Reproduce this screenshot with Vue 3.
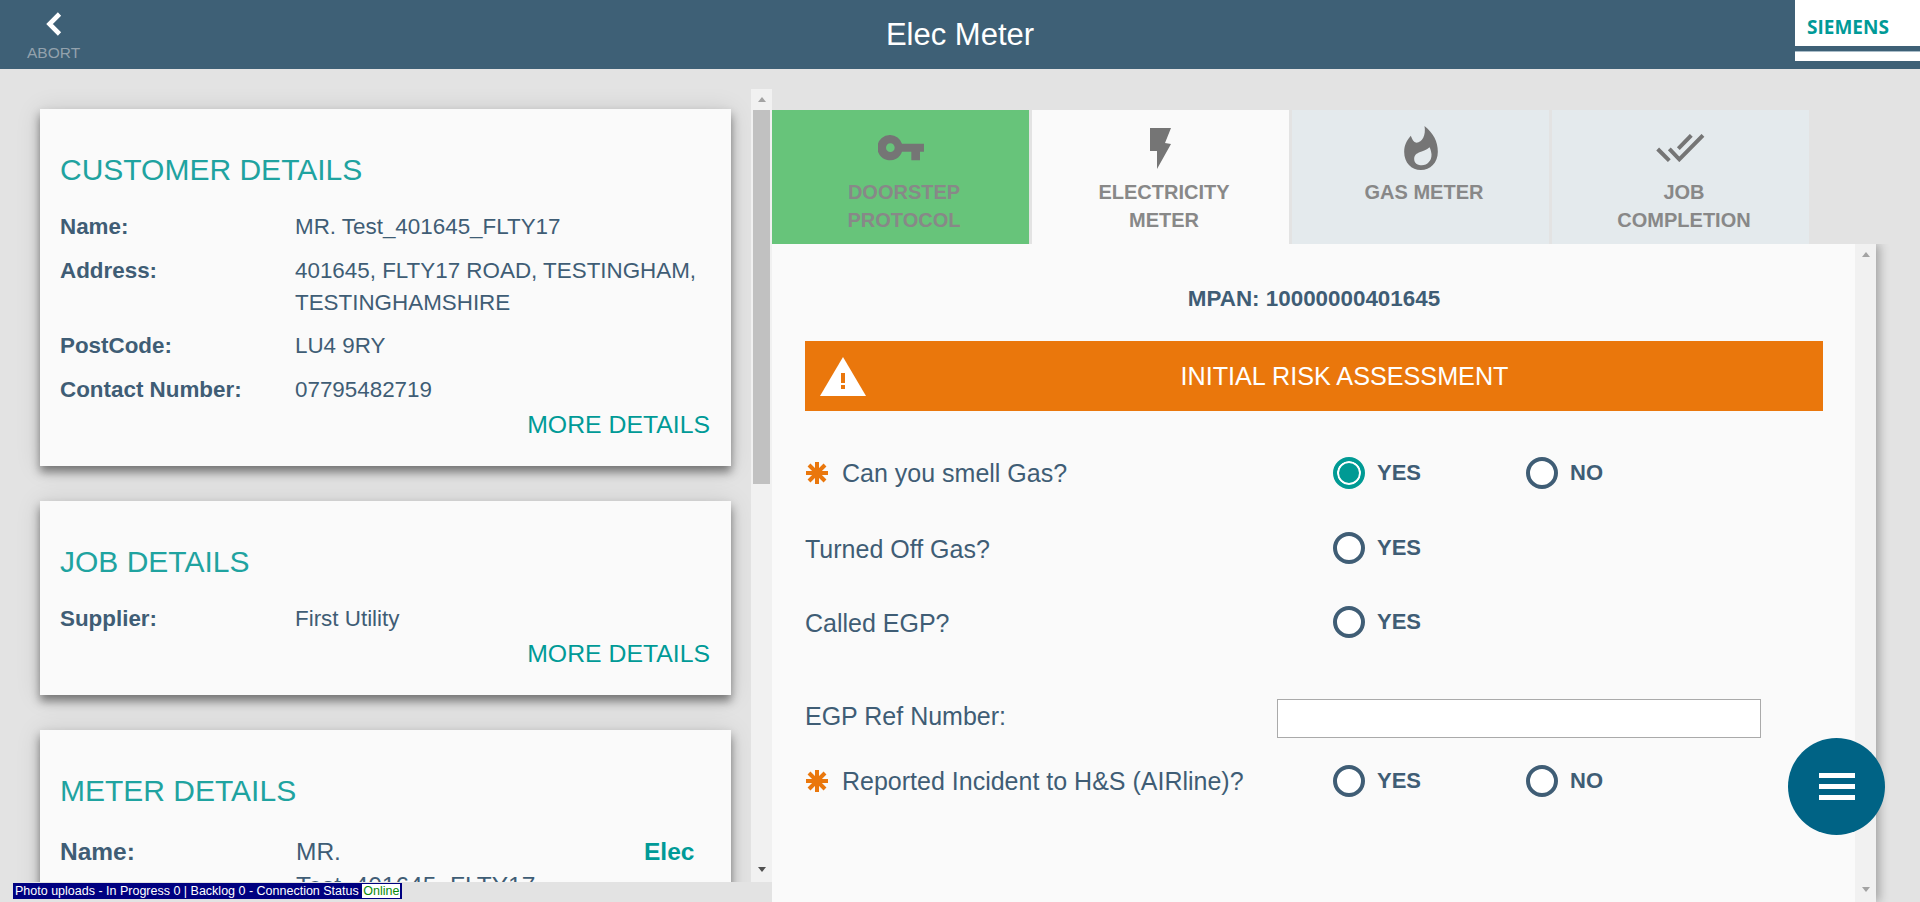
<script setup>
const customerRows = [
  { label: 'Name:', value: 'MR. Test_401645_FLTY17' },
  { label: 'Address:', value: '401645, FLTY17 ROAD, TESTINGHAM, TESTINGHAMSHIRE' },
  { label: 'PostCode:', value: 'LU4 9RY' },
  { label: 'Contact Number:', value: '07795482719' }
]
</script>

<template>
  <div class="app">
    <header class="topbar">
      <div class="abort">
        <svg class="chevron" viewBox="0 0 16 24" width="16" height="24"><path d="M13.5 2 L3.5 12 L13.5 22" fill="none" stroke="#fff" stroke-width="4.6"/></svg>
        <span>ABORT</span>
      </div>
      <h1 class="page-title">Elec Meter</h1>
      <div class="logo">
        <div class="logo-main"><span>SIEMENS</span></div>
        <div class="logo-strip"></div>
      </div>
    </header>

    <main class="content">
      <section class="left-pane">
        <div class="left-scroll">
          <article class="card">
            <h2>CUSTOMER DETAILS</h2>
            <div v-for="row in customerRows" :key="row.label" class="row">
              <strong>{{ row.label }}</strong>
              <span>{{ row.value }}</span>
            </div>
            <a class="more">MORE DETAILS</a>
          </article>
          <article class="card">
            <h2>JOB DETAILS</h2>
            <div class="row">
              <strong>Supplier:</strong>
              <span>First Utility</span>
            </div>
            <a class="more">MORE DETAILS</a>
          </article>
          <article class="card meter">
            <h2>METER DETAILS</h2>
            <div class="meter-row">
              <strong>Name:</strong>
              <span class="meter-value">MR. Test_401645_FLTY17</span>
              <strong class="meter-type">Elec</strong>
            </div>
          </article>
        </div>
        <div class="scrollbar left-bar">
          <div class="arrow-box"><i class="arrow-up"></i></div>
          <div class="thumb"></div>
          <div class="track-fill"></div>
          <div class="arrow-box low"><i class="arrow-down dark"></i></div>
        </div>
      </section>

      <section class="right-pane">
        <nav class="tabs">
          <div class="tab done">
            <div class="tab-icon">
              <svg viewBox="54 46 138 76" width="46" height="25.3"><path fill="#757575" fill-rule="evenodd" d="M91 46a38 38 0 0 1 35 26h66v24h-12v26h-26V96h-28a38 38 0 1 1-35-50zm0 25a13 13 0 1 0 0 26 13 13 0 0 0 0-26z"/></svg>
            </div>
            <div class="tab-label">DOORSTEP<br>PROTOCOL</div>
          </div>
          <div class="tab active">
            <div class="tab-icon">
              <svg viewBox="0 0 21 41" width="21" height="41"><path fill="#757575" d="M0 0H21L15 15L21 16L7 41V23H0Z"/></svg>
            </div>
            <div class="tab-label">ELECTRICITY<br>METER</div>
          </div>
          <div class="tab">
            <div class="tab-icon">
              <svg viewBox="42 28 101 132" width="34" height="44"><path fill="#757575" fill-rule="evenodd" d="M103 28C130 50 143 75 143 105C143 138 120 160 92 160C64 160 42 138 42 105C42 85 50 70 62 57C66 68 70 76 79 78C96 78 108 55 103 28ZM72 127C72 141 84 146 95 146C112 146 125 132 124 113C123 103 121 97 118 92C110 101 98 103 90 106C79 110 72 116 72 127Z"/></svg>
            </div>
            <div class="tab-label">GAS METER</div>
          </div>
          <div class="tab">
            <div class="tab-icon">
              <svg viewBox="50 44 145 85" width="48.3" height="28.3"><path fill="none" stroke="#757575" stroke-width="12" d="M55 89L90 124M90 89L120 120L191 48M117 88L156 48"/></svg>
            </div>
            <div class="tab-label">JOB<br>COMPLETION</div>
          </div>
        </nav>

        <div class="panel">
          <div class="panel-body">
            <div class="mpan">MPAN: 10000000401645</div>
            <div class="banner">
              <svg viewBox="0 0 46 39" width="46" height="39"><path fill="#fff" d="M23 0L46 39H0Z"/><path fill="#ea770c" d="M21 16h4v10h-4zM21 28h4v4h-4z"/></svg>
              <span>INITIAL RISK ASSESSMENT</span>
            </div>

            <div class="question">
              <label class="q-label">
                <svg class="star" viewBox="0 0 22 22" width="22" height="22"><path stroke="#ea770c" stroke-width="4" d="M11 0V22M0 11H22M3 3L19 19M19 3L3 19"/></svg>
                Can you smell Gas?
              </label>
              <div class="option"><i class="radio checked"></i><b>YES</b></div>
              <div class="option"><i class="radio"></i><b>NO</b></div>
            </div>
            <div class="question">
              <label class="q-label">Turned Off Gas?</label>
              <div class="option"><i class="radio"></i><b>YES</b></div>
            </div>
            <div class="question">
              <label class="q-label">Called EGP?</label>
              <div class="option"><i class="radio"></i><b>YES</b></div>
            </div>
            <div class="ref-row">
              <label class="q-label">EGP Ref Number:</label>
              <input class="ref-input" type="text" />
            </div>
            <div class="question incident">
              <label class="q-label">
                <svg class="star" viewBox="0 0 22 22" width="22" height="22"><path stroke="#ea770c" stroke-width="4" d="M11 0V22M0 11H22M3 3L19 19M19 3L3 19"/></svg>
                Reported Incident to H&amp;S (AIRline)?
              </label>
              <div class="option"><i class="radio"></i><b>YES</b></div>
              <div class="option"><i class="radio"></i><b>NO</b></div>
            </div>
          </div>
          <div class="scrollbar panel-bar">
            <div class="arrow-box"><i class="arrow-up"></i></div>
            <div class="track-fill"></div>
            <div class="arrow-box low"><i class="arrow-down"></i></div>
          </div>
        </div>
      </section>
    </main>

    <button class="fab" type="button" aria-label="Menu"><span></span><span></span><span></span></button>
    <div class="status">Photo uploads - In Progress 0 | Backlog 0 - Connection Status <em>Online</em></div>
  </div>
</template>

<style>
html, body { margin: 0; overflow: hidden; }
</style>

<style scoped>
.app {
  position: relative;
  display: flex;
  flex-direction: column;
  height: 100vh;
  overflow: hidden;
  background: #e3e3e3;
  font-family: "Liberation Sans", Arial, sans-serif;
  color: #3f5d75;
}
.topbar {
  position: relative;
  flex: 0 0 69px;
  min-height: 0;
  display: flex;
  justify-content: center;
  background: #3e6076;
}
.abort {
  position: absolute;
  left: 27px;
  top: 12px;
  display: flex;
  flex-direction: column;
  align-items: center;
  color: #93a2ad;
  font-size: 15.5px;
  line-height: 16px;
}
.chevron { display: block; margin-bottom: 9px; }
.page-title {
  margin: 0;
  height: 69px;
  color: #fff;
  font-size: 31px;
  font-weight: 400;
  line-height: 70px;
}
.logo { position: absolute; right: 0; top: 0; width: 125px; }
.logo-main {
  height: 46px;
  background: #fff;
  box-sizing: border-box;
  padding: 16px 0 0 12px;
  color: #009a97;
  font-family: "Open Sans", sans-serif;
  font-weight: 700;
  font-size: 19px;
  line-height: 23px;
  letter-spacing: 0;
}
.logo-strip {
  height: 10px;
  margin-top: 5px;
  background: #fff;
  border-top: 1px solid #a9bcc8;
  box-sizing: border-box;
}

.content { flex: 1; display: flex; min-height: 0; }
.left-pane {
  flex: 0 0 772px;
  display: flex;
  margin: 20px 0;
  min-height: 0;
}
.left-scroll {
  flex: 0 0 751px;
  box-sizing: border-box;
  padding: 20px 20px 0 40px;
  overflow: hidden;
}
.card {
  background: #fafafa;
  padding: 43px 21px 27.5px 20px;
  margin-bottom: 34.5px;
  box-shadow: 0 6px 9px rgba(0, 0, 0, 0.45), 0 2px 24px rgba(0, 0, 0, 0.12);
}
.card h2 {
  margin: 0 0 23px;
  color: #1fa3a0;
  font-size: 30px;
  font-weight: 400;
  line-height: 36px;
}
.row {
  display: grid;
  grid-template-columns: 235px 1fr;
  font-size: 22.4px;
  line-height: 32px;
  margin-bottom: 11.5px;
}
.row strong { font-weight: 700; }
.more {
  display: block;
  margin-top: -6.5px;
  text-align: right;
  color: #009a97;
  font-size: 24.8px;
  line-height: 28px;
}
.meter-row {
  display: grid;
  grid-template-columns: 236px 348px auto;
  font-size: 24.5px;
  line-height: 34px;
  margin-top: 26.5px;
}
.meter-value { width: 270px; }
.meter-type { color: #009a97; }

.scrollbar {
  flex: 0 0 21px;
  display: flex;
  flex-direction: column;
  background: #f1f1f1;
}
.arrow-box {
  flex: 0 0 21px;
  display: flex;
  justify-content: center;
  padding-top: 8px;
  box-sizing: border-box;
}
.arrow-box.low { padding-top: 6px; }
.arrow-up, .arrow-down {
  width: 0;
  height: 0;
  border-left: 4.5px solid transparent;
  border-right: 4.5px solid transparent;
}
.arrow-up { border-bottom: 5px solid #a3a3a3; }
.arrow-down { border-top: 5px solid #a3a3a3; }
.arrow-down.dark { border-top-color: #505050; }
.thumb {
  flex: 0 0 374px;
  margin: 0 2px;
  background: #c1c1c1;
}
.track-fill { flex: 1; }

.right-pane {
  flex: 0 0 1104px;
  display: flex;
  flex-direction: column;
  padding-top: 41px;
  min-height: 0;
}
.tabs { display: flex; gap: 3px; flex: 0 0 134px; }
.tab {
  flex: 0 0 257px;
  box-sizing: border-box;
  padding-top: 10px;
  background: #e4eaed;
  color: #888;
  font-size: 20px;
  font-weight: 700;
  line-height: 28px;
  text-align: center;
}
.tab.done { background: #67c47a; }
.tab.active { background: #fafafa; }
.tab-icon {
  height: 56px;
  margin-bottom: 2px;
  display: flex;
  align-items: center;
  justify-content: center;
}
.tab-icon svg { display: block; }
.tab-label { padding-left: 7px; }
.panel {
  flex: 1;
  display: flex;
  min-height: 0;
  background: #fafafa;
  box-shadow: 3px 0 10px rgba(0, 0, 0, 0.3);
  clip-path: inset(0 -20px 0 0);
}
.panel-body {
  flex: 1;
  box-sizing: border-box;
  padding: 0 32px 0 33px;
  overflow: hidden;
}
.mpan {
  font-size: 22.4px;
  font-weight: 700;
  text-align: center;
  line-height: 32px;
  padding-top: 39px;
  margin-bottom: 26px;
}
.banner {
  display: flex;
  align-items: center;
  height: 70px;
  padding-left: 15px;
  background: #ea770c;
  color: #fff;
  font-size: 25.2px;
  margin-bottom: 25px;
}
.banner span { flex: 1; text-align: center; }
.question {
  display: grid;
  grid-template-columns: 528px 193px auto;
  align-items: center;
  height: 74.5px;
}
.question + .question .q-label { padding-top: 2px; }
.q-label {
  display: flex;
  align-items: center;
  font-size: 25px;
  line-height: 32px;
}
.star { margin: 0 14px 0 1px; flex: none; }
.option { display: flex; align-items: center; gap: 12px; }
.option b { font-size: 22px; font-weight: 700; }
.radio {
  width: 32px;
  height: 32px;
  box-sizing: border-box;
  border: 4px solid #3f5d75;
  border-radius: 50%;
  background: #fff;
}
.radio.checked {
  border-color: #009a94;
  background: #009a94;
  box-shadow: inset 0 0 0 2px #fff;
}
.ref-row {
  display: grid;
  grid-template-columns: 472px 484px;
  align-items: center;
  margin-top: 39px;
  height: 39px;
}
.ref-row .q-label { margin-top: -5px; }
.ref-input {
  box-sizing: border-box;
  width: 484px;
  height: 39px;
  border: 1px solid #aaa;
  background: #fff;
  padding: 0;
  margin: 0;
}
.incident { height: 50px; margin-top: 18px; }

.fab {
  position: absolute;
  right: 35px;
  bottom: 67px;
  width: 97px;
  height: 97px;
  padding: 0;
  border: 0;
  border-radius: 50%;
  background: #006385;
  display: flex;
  flex-direction: column;
  align-items: center;
  justify-content: center;
  gap: 6.5px;
}
.fab span { width: 36px; height: 4.5px; background: #fff; }
.status {
  position: absolute;
  left: 13px;
  top: 883px;
  height: 16px;
  box-sizing: border-box;
  padding: 1px 2px;
  background: #000080;
  color: #fff;
  font-size: 12.5px;
  line-height: 14px;
  white-space: pre;
}
.status em {
  font-style: normal;
  background: #fff;
  color: #0a8a0a;
  display: inline-block;
  padding: 0 1px;
}
</style>
